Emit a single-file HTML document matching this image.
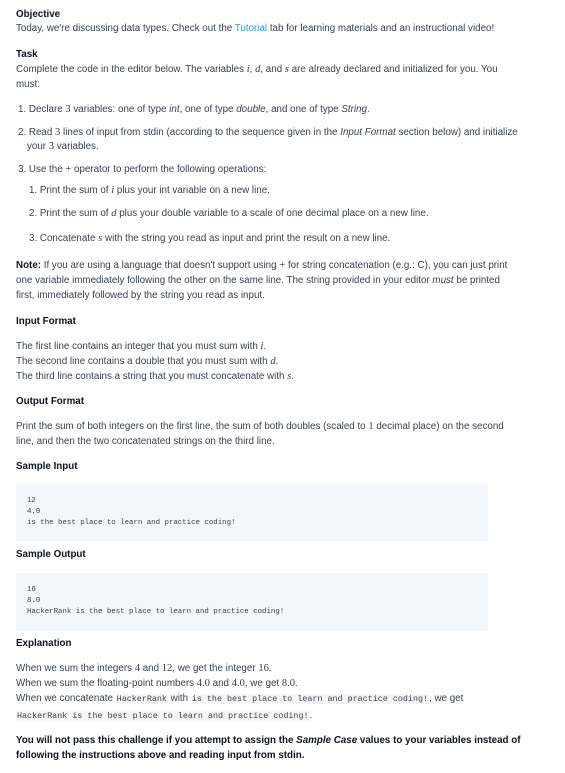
<!DOCTYPE html>
<html><head><meta charset="utf-8"><style>
body{margin:0;width:565px;height:773px;background:#fff;font-family:"Liberation Sans",sans-serif;font-size:9.8px;color:#39424e;position:relative;overflow:hidden}
.l{position:absolute;left:16px;white-space:nowrap;line-height:12px}
b,.h{font-weight:bold;color:#0e141e}
.m{font-family:"Liberation Serif",serif;font-style:italic;font-size:10.5px}
.n{font-family:"Liberation Serif",serif;font-size:10.5px}
.box{position:absolute;left:16px;width:472px;background:#f3f6fb}
.c{font-family:"Liberation Mono",monospace;font-size:7.4px;color:#39424e}
.ci{font-family:"Liberation Mono",monospace;font-size:8.4px;background:#f5f5f5;padding:0 1px}
a{color:#1ba2e6;text-decoration:none}
</style></head><body>
<div class="l h" style="top:9px">Objective</div>
<div class="l" style="top:23px">Today, we're discussing data types. Check out the <a>Tutorial</a> tab for learning materials and an instructional video!</div>
<div class="l h" style="top:49px">Task</div>
<div class="l" style="top:64px">Complete the code in the editor below. The variables <span class="m">i</span>, <span class="m">d</span>, and <span class="m">s</span> are already declared and initialized for you. You</div>
<div class="l" style="top:79px">must:</div>
<div class="l" style="top:104px;left:18px">1. Declare <span class="n">3</span> variables: one of type <i>int</i>, one of type <i>double</i>, and one of type <i>String</i>.</div>
<div class="l" style="top:127px;left:18px">2. Read <span class="n">3</span> lines of input from stdin (according to the sequence given in the <i>Input Format</i> section below) and initialize</div>
<div class="l" style="top:141px;left:27px">your <span class="n">3</span> variables.</div>
<div class="l" style="top:164px;left:18px">3. Use the <span class="n">+</span> operator to perform the following operations:</div>
<div class="l" style="top:185px;left:29px">1. Print the sum of <span class="m">i</span> plus your int variable on a new line.</div>
<div class="l" style="top:208px;left:29px">2. Print the sum of <span class="m">d</span> plus your double variable to a scale of one decimal place on a new line.</div>
<div class="l" style="top:233px;left:29px">3. Concatenate <span class="m">s</span> with the string you read as input and print the result on a new line.</div>
<div class="l" style="top:260px"><b>Note:</b> If you are using a language that doesn't support using <span class="n">+</span> for string concatenation (e.g.: C), you can just print</div>
<div class="l" style="top:275px">one variable immediately following the other on the same line. The string provided in your editor <i>must</i> be printed</div>
<div class="l" style="top:290px">first, immediately followed by the string you read as input.</div>
<div class="l h" style="top:316px">Input Format</div>
<div class="l" style="top:341px">The first line contains an integer that you must sum with <span class="m">i</span>.</div>
<div class="l" style="top:356px">The second line contains a double that you must sum with <span class="m">d</span>.</div>
<div class="l" style="top:371px">The third line contains a string that you must concatenate with <span class="m">s</span>.</div>
<div class="l h" style="top:396px">Output Format</div>
<div class="l" style="top:421px">Print the sum of both integers on the first line, the sum of both doubles (scaled to <span class="n">1</span> decimal place) on the second</div>
<div class="l" style="top:436px">line, and then the two concatenated strings on the third line.</div>
<div class="l h" style="top:461px">Sample Input</div>
<div class="box" style="top:484px;height:57px"></div>
<div class="l c" style="top:496px;left:27px;line-height:11px">12<br>4.0<br>is the best place to learn and practice coding!</div>
<div class="l h" style="top:549px">Sample Output</div>
<div class="box" style="top:573px;height:58px"></div>
<div class="l c" style="top:585px;left:27px;line-height:11px">16<br>8.0<br>HackerRank is the best place to learn and practice coding!</div>
<div class="l h" style="top:638px">Explanation</div>
<div class="l" style="top:663px">When we sum the integers <span class="n">4</span> and <span class="n">12</span>, we get the integer <span class="n">16</span>.</div>
<div class="l" style="top:678px">When we sum the floating-point numbers <span class="n">4.0</span> and <span class="n">4.0</span>, we get <span class="n">8.0</span>.</div>
<div class="l" style="top:693px">When we concatenate <span class="ci">HackerRank</span> with <span class="ci">is the best place to learn and practice coding!</span>, we get</div>
<div class="l" style="top:710px"><span class="ci">HackerRank is the best place to learn and practice coding!</span>.</div>
<div class="l h" style="top:735px">You will not pass this challenge if you attempt to assign the <i>Sample Case</i> values to your variables instead of</div>
<div class="l h" style="top:750px">following the instructions above and reading input from stdin.</div>
</body></html>
